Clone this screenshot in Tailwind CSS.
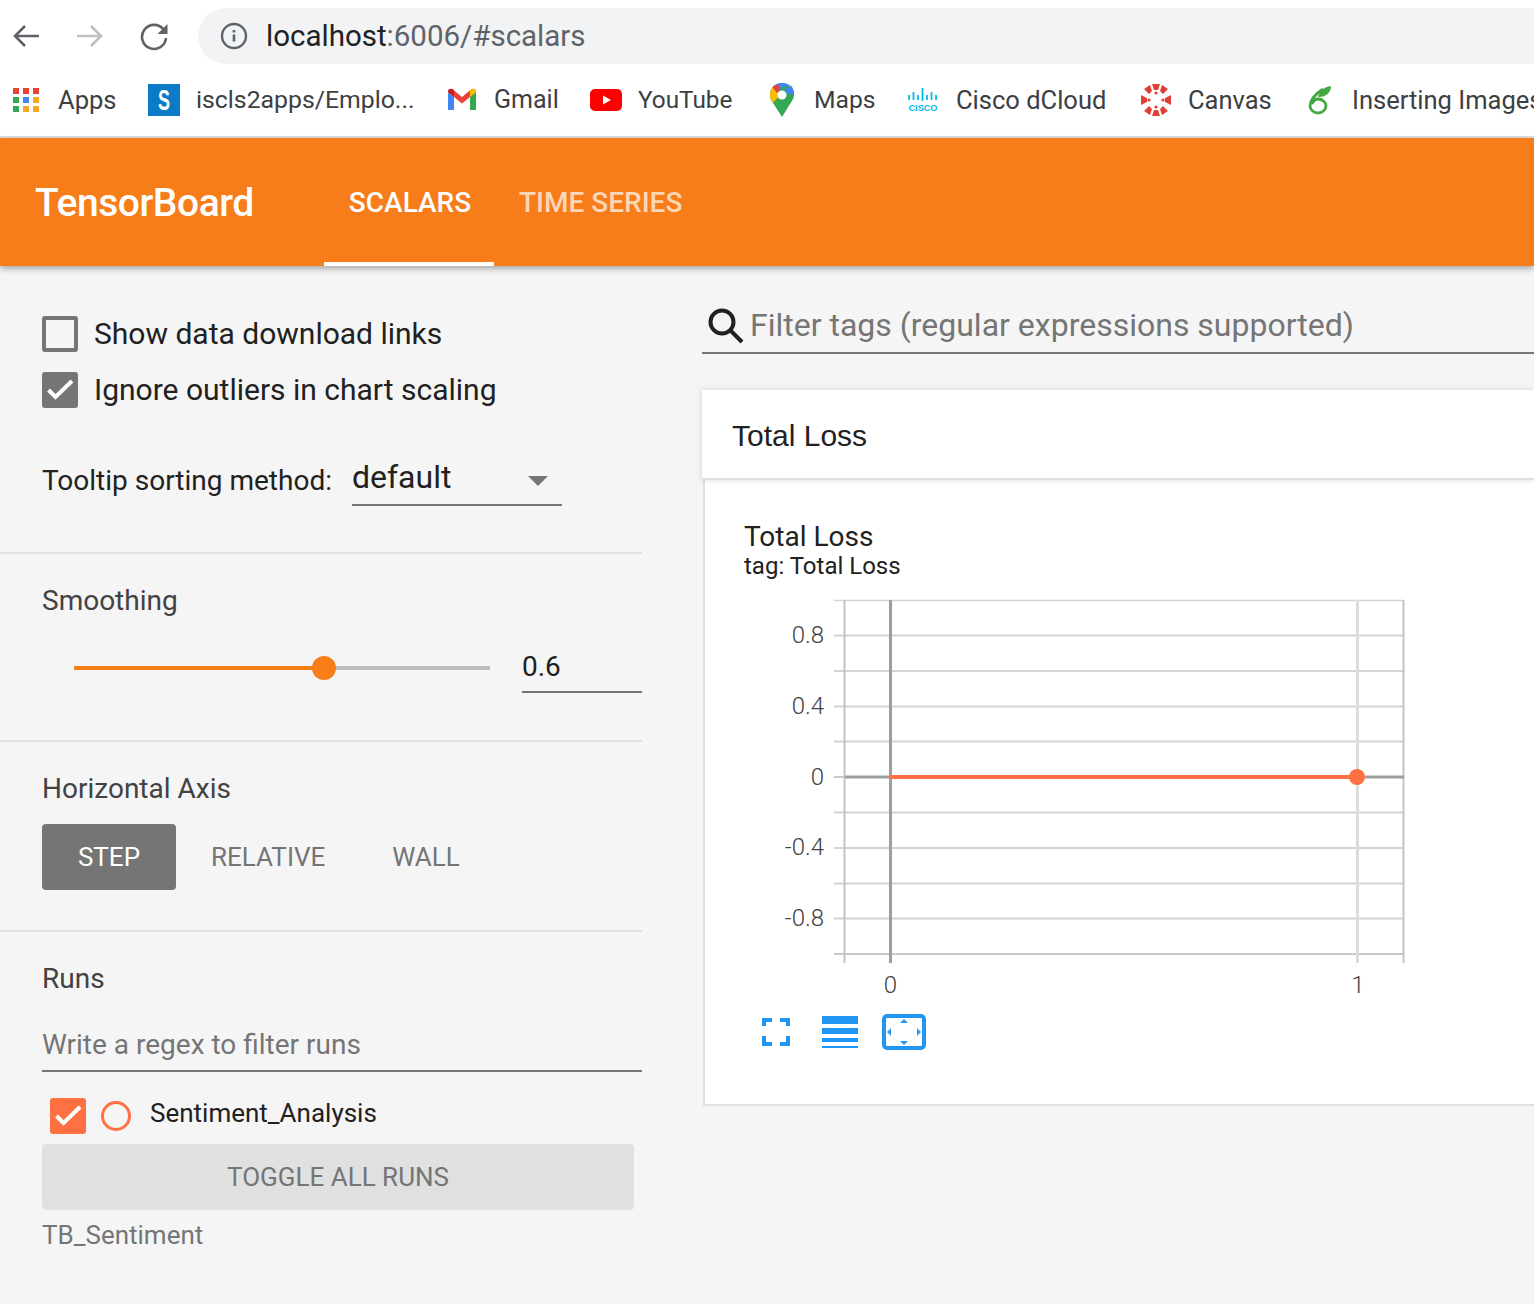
<!doctype html>
<html>
<head>
<meta charset="utf-8">
<script src="https://cdn.jsdelivr.net/npm/@tailwindcss/browser@4"></script>
</head>
<body class="m-0 w-[1534px] h-[1304px] overflow-hidden bg-[#f5f5f5] font-['Roboto',sans-serif] text-[#212121]">
<div class="h-[138px] bg-white border-b-2 border-[#dadce0]">
  <div class="h-[72px] flex items-center pl-[12px]">
    <svg class="shrink-0 w-[28px] h-[28px]" viewBox="0 0 28 28" fill="none" stroke="#5f6368" stroke-width="2.6"><path d="M27 14H3M13 4L3 14l10 10"/></svg>
    <svg class="shrink-0 w-[28px] h-[28px] ml-[36px]" viewBox="0 0 28 28" fill="none" stroke="#bdc1c6" stroke-width="2.6"><path d="M1 14h24M15 4l10 10-10 10"/></svg>
    <svg class="shrink-0 w-[30px] h-[30px] ml-[36px]" viewBox="0 0 30 30" fill="none"><path d="M23.5 8.5A12 12 0 1 0 26 17" stroke="#5f6368" stroke-width="2.6"/><path d="M27.5 3v10h-10z" fill="#5f6368"/></svg>
    <div class="shrink-0 ml-[28px] h-[56px] w-[1400px] rounded-l-[28px] bg-[#f1f3f4] flex items-center pl-[22px]">
      <svg class="shrink-0 w-[28px] h-[28px]" viewBox="0 0 28 28" fill="none"><circle cx="14" cy="14" r="12" stroke="#5f6368" stroke-width="2.4"/><path d="M14 12.5v7M14 8v2.6" stroke="#5f6368" stroke-width="2.6"/></svg>
      <span class="ml-[18px] text-[29.5px] text-[#202124] leading-none whitespace-nowrap relative top-[1px]">localhost<span class="text-[#5f6368]">:6006/#scalars</span></span>
    </div>
  </div>
  <div class="h-[56px] flex items-center text-[25.5px] text-[#3c4043] whitespace-nowrap">
    <div class="shrink-0 flex items-center w-[148px] pl-[12px]">
      <svg class="shrink-0 w-[28px] h-[28px]" viewBox="0 0 28 28"><rect x="1" y="2" width="6" height="6" fill="#ea4335"/><rect x="11" y="2" width="6" height="6" fill="#ea4335"/><rect x="21" y="2" width="6" height="6" fill="#ea4335"/><rect x="1" y="11" width="6" height="6" fill="#34a853"/><rect x="11" y="11" width="6" height="6" fill="#4285f4"/><rect x="21" y="11" width="6" height="6" fill="#f9a825"/><rect x="1" y="20" width="6" height="6" fill="#34a853"/><rect x="11" y="20" width="6" height="6" fill="#f9a825"/><rect x="21" y="20" width="6" height="6" fill="#f9a825"/></svg>
      <span class="ml-[18px]">Apps</span>
    </div>
    <div class="shrink-0 flex items-center w-[300px]">
      <div class="w-[32px] h-[32px] bg-[#0a7bc4] text-white flex items-center justify-center font-['Liberation_Sans',sans-serif] font-bold text-[30px] leading-none"><span class="scale-x-[0.6]">S</span></div>
      <span class="ml-[16px] text-[24.8px]">iscls2apps/Emplo...</span>
    </div>
    <div class="shrink-0 flex items-center w-[142px]">
      <svg class="shrink-0 w-[28px] h-[28px]" viewBox="0 0 28 28"><path d="M0 6v18h6V11z" fill="#4285f4"/><path d="M22 11v13h6V6z" fill="#34a853"/><path d="M0 6c0-3 3-4 5-2.500L14 11l9-7.500c2-1.500 5-.5 5 2.500l-6 5-8 6.500L6 11z" fill="#ea4335"/><path d="M0 6c0-3 3-4 5-2.500L6 4.500V11z" fill="#c5221f"/><path d="M28 6c0-3-3-4-5-2.500l-1 1V11z" fill="#fbbc04"/></svg>
      <span class="ml-[18px] text-[25px]">Gmail</span>
    </div>
    <div class="shrink-0 flex items-center w-[180px]">
      <svg class="shrink-0 w-[32px] h-[24px]" viewBox="0 0 32 24"><rect width="32" height="22" y="1" rx="5" fill="#f00"/><path d="M13 7.500v9l8-4.500z" fill="#fff"/></svg>
      <span class="ml-[16px] text-[24.3px]">YouTube</span>
    </div>
    <div class="shrink-0 flex items-center w-[138px]">
      <svg class="shrink-0 w-[24px] h-[34px]" viewBox="0 0 24 34"><path d="M12 0C5 0 0 5 0 12c0 3 1 5 3 8l9 14 8-13c2-3 4-6 4-9 0-7-5-12-12-12z" fill="#34a853"/><path d="M2.500 4.500A12 12 0 0 0 0 12c0 3 1 5 3 8L12 10z" fill="#fbbc04"/><path d="M2.500 4.500 8 9.500 12 4 20 2.500A12 12 0 0 0 12 0C8 0 4.500 2 2.500 4.500z" fill="#4285f4"/><path d="M2.500 4.500A12 12 0 0 1 8 1l2 5-3 4z" fill="#ea4335"/><path d="M16 5l5-2.500A12 12 0 0 1 24 12l-8-2z" fill="#4285f4"/><circle cx="12" cy="12" r="4.500" fill="#fff"/></svg>
      <span class="ml-[20px] text-[24.7px]">Maps</span>
    </div>
    <div class="shrink-0 flex items-center w-[232px]">
      <svg class="shrink-0 w-[30px] h-[24px]" viewBox="0 0 30 24"><path d="M1 7v5M5.500 4v8M10 7v5M14.500 0v13M19 7v5M23.500 4v8M28 7v5" stroke="#00bceb" stroke-width="1.800"/><text x="0.500" y="22.500" font-family="Liberation Sans" font-weight="700" font-size="9" textLength="29" lengthAdjust="spacingAndGlyphs" fill="#00bceb">CISCO</text></svg>
      <span class="ml-[18px]">Cisco dCloud</span>
    </div>
    <div class="shrink-0 flex items-center w-[168px]">
      <svg class="shrink-0 w-[32px] h-[34px]" viewBox="0 0 32 34" fill="#e13f33"><path d="M12 1h8l-2 6h-4zM12 33h8l-2-6h-4zM1 12v10l6-3v-4zM31 12v10l-6-3v-4z"/><path d="M4 6l6-4 2 6-3 3zM28 6l-6-4-2 6 3 3zM4 28l6 4 2-6-3-3zM28 28l-6 4-2-6 3-3z"/><circle cx="16" cy="10" r="1.600"/><circle cx="16" cy="24" r="1.600"/><circle cx="9" cy="17" r="1.600"/><circle cx="23" cy="17" r="1.600"/></svg>
      <span class="ml-[16px]">Canvas</span>
    </div>
    <div class="shrink-0 flex items-center">
      <svg class="shrink-0 w-[24px] h-[30px]" viewBox="0 0 24 30" fill="none"><path d="M15 4C6 10 2 16 2 21c0 4 4 7 8 7s8-3 8-7-4-7-8-7-5 3-6 5" stroke="#43a843" stroke-width="2.800"/><path d="M10 12C11 6 16 2 23 1c0 6-4 11-13 11z" fill="#43a843"/></svg>
      <span class="ml-[20px]">Inserting Images</span>
    </div>
  </div>
</div>
<header class="relative z-10 h-[128px] bg-[#f77c1a] flex items-stretch text-white shadow-[0_3px_6px_rgba(0,0,0,0.3)]">
  <div class="pl-[35px] w-[324px] flex items-center text-[39px] font-medium leading-none tracking-[-0.45px] pt-[2px]">TensorBoard</div>
  <div class="w-[170px] border-b-4 border-white flex items-center justify-center text-[28px] font-medium pt-[5px] pl-[2px]">SCALARS</div>
  <div class="ml-[25px] flex items-center text-[28px] font-medium text-white/70 pt-[2px]">TIME SERIES</div>
</header>
<main class="flex">
  <aside class="w-[642px] shrink-0">
    <div class="h-[288px] border-b-2 border-[#e0e0e0] pl-[42px] pt-[50px]">
      <div class="flex items-center h-[36px] text-[30px]">
        <div class="w-[36px] h-[36px] rounded-[3px] border-[4px] border-[#757575]"></div>
        <span class="ml-[16px] pb-[2px]">Show data download links</span>
      </div>
      <div class="flex items-center h-[36px] mt-[20px] text-[30px]">
        <div class="w-[36px] h-[36px] rounded-[3px] bg-[#757575] flex items-center justify-center"><svg class="w-[28px] h-[28px]" viewBox="0 0 28 28" fill="none" stroke="#fff" stroke-width="4"><path d="M2.500 14l7 7L26 5"/></svg></div>
        <span class="ml-[16px] pb-[2px]">Ignore outliers in chart scaling</span>
      </div>
      <div class="flex items-end mt-[44px]">
        <span class="text-[28px] leading-[40px] pb-[5px]">Tooltip sorting method:</span>
        <div class="relative ml-[20px] w-[210px] h-[54px] border-b-2 border-[#757575] text-[32px] leading-[42px] flex items-center pb-[2px]">default
          <div class="absolute right-[14px] top-[24px] w-0 h-0 border-l-[10px] border-r-[10px] border-t-[10px] border-l-transparent border-r-transparent border-t-[#757575]"></div>
        </div>
      </div>
    </div>
    <div class="h-[188px] border-b-2 border-[#e0e0e0] pl-[42px] pt-[30px]">
      <div class="text-[28px] leading-[34px] text-[#424242]">Smoothing</div>
      <div class="flex items-center mt-[25px]">
        <div class="relative ml-[32px] w-[416px] h-[4px] bg-[#bdbdbd]">
          <div class="h-[4px] w-[250px] bg-[#f77f17]"></div>
          <div class="absolute left-[238px] top-[-10px] w-[24px] h-[24px] rounded-full bg-[#f77f17]"></div>
        </div>
        <div class="ml-[32px] w-[120px] h-[50px] border-b-2 border-[#757575] text-[28px] leading-[48px]">0.6</div>
      </div>
    </div>
    <div class="h-[190px] border-b-2 border-[#e0e0e0] pl-[42px] pt-[30px]">
      <div class="text-[28px] leading-[34px] text-[#424242]">Horizontal Axis</div>
      <div class="flex items-center mt-[18px] text-[26px] leading-none text-[#757575]">
        <div class="w-[134px] h-[66px] rounded-[4px] bg-[#757575] text-white flex items-center justify-center">STEP</div>
        <span class="ml-[35px]">RELATIVE</span>
        <span class="ml-[67px]">WALL</span>
      </div>
    </div>
    <div class="pl-[42px] pt-[30px]">
      <div class="text-[28px] leading-[34px] text-[#424242]">Runs</div>
      <div class="w-[600px] h-[54px] mt-[22px] border-b-2 border-[#757575] text-[28px] leading-[54px] text-[#757575]">Write a regex to filter runs</div>
      <div class="flex items-center mt-[26px] pl-[8px] h-[36px]">
        <div class="w-[36px] h-[36px] rounded-[3px] bg-[#ff7043] flex items-center justify-center"><svg class="w-[28px] h-[28px]" viewBox="0 0 28 28" fill="none" stroke="#fff" stroke-width="4"><path d="M2.500 14l7 7L26 5"/></svg></div>
        <div class="ml-[15px] w-[30px] h-[30px] rounded-full border-[3px] border-[#ff7043]"></div>
        <span class="ml-[19px] text-[26px] leading-none pb-[7px]">Sentiment_Analysis</span>
      </div>
      <div class="w-[592px] h-[66px] mt-[10px] rounded-[4px] bg-[#e0e0e0] text-[#757575] text-[26px] flex items-center justify-center">TOGGLE ALL RUNS</div>
      <div class="mt-[9px] text-[26px] leading-[32px] text-[#757575]">TB_Sentiment</div>
    </div>
  </aside>
  <section class="ml-[60px] w-[832px] shrink-0">
    <div class="h-[88px] border-b-2 border-[#757575] flex items-end pb-[8px] pl-[6px]">
      <svg class="w-[36px] h-[36px]" viewBox="0 0 36 36" fill="none" stroke="#212121" stroke-width="4"><circle cx="14" cy="14" r="11.500"/><path d="M22 22l12 12"/></svg>
      <span class="ml-[6px] text-[32px] leading-[40px] text-[#757575] whitespace-nowrap relative top-[1px]">Filter tags (regular expressions supported)</span>
    </div>
    <div class="mt-[36px] h-[90px] bg-white border-b-2 border-[#e0e0e0] shadow-[0_0_6px_rgba(0,0,0,0.15)] pl-[30px] flex items-center font-['Liberation_Sans',sans-serif] text-[30px] relative z-[1] pt-[3px]">Total Loss</div>
    <div class="ml-[1px] h-[626px] bg-white border-l-2 border-b-2 border-[#e0e0e0] pl-[39px] pt-[42px]">
      <div class="text-[28px] leading-[30px]">Total Loss</div>
      <div class="text-[24px] leading-[28px]">tag: Total Loss</div>
      <svg class="block mt-[10px] ml-[10px]" width="700" height="470" viewBox="754 590 700 470" font-family="Roboto" font-weight="300" fill="#424242" font-size="24">
        <g stroke="#d4d4d4" stroke-width="2">
          <path d="M834 600.500H1404" stroke-width="1.500"/>
          <path d="M834 635.500H1404M834 671H1404M834 706.500H1404M834 741.500H1404M834 812.500H1404M834 848H1404M834 883.500H1404M834 918.500H1404"/>
          <path d="M834 777H1404M834 954H1404" stroke="#c8c8c8"/>
          <path d="M1357.500 600V963" stroke="#dcdcdc" stroke-width="3"/>
        </g>
        <path d="M844.500 600V963M1403.500 600V963" stroke="#c4c4c4" stroke-width="2" fill="none"/>
        <path d="M890.500 600V963" stroke="#9e9e9e" stroke-width="3" fill="none"/>
        <path d="M845 777H890M1365 777H1404" stroke="#9e9e9e" stroke-width="3" fill="none"/>
        <path d="M890 777H1357" stroke="#ff7043" stroke-width="4" fill="none"/>
        <circle cx="1357" cy="777" r="8" fill="#ff7043"/>
        <g text-anchor="end">
          <text x="824" y="643">0.8</text><text x="824" y="714">0.4</text><text x="824" y="785">0</text><text x="824" y="855">-0.4</text><text x="824" y="926">-0.8</text>
        </g>
        <g text-anchor="middle"><text x="890.500" y="993">0</text><text x="1358" y="993">1</text></g>
        <path d="M764 1026v-6h8m8 0h8v6M764 1036v8h8m8 0h8v-8" fill="none" stroke="#2196f3" stroke-width="4"/>
        <path d="M822 1016h36v8h-36zM822 1028h36v6h-36zM822 1038h36v4h-36zM822 1046h36v2h-36z" fill="#2196f3"/>
        <rect x="884" y="1016" width="40" height="32" rx="3" fill="none" stroke="#2196f3" stroke-width="4"/>
        <path d="M904 1019l4 4h-8zM904 1045l4-4h-8zM887 1032l4-4v8zM921 1032l-4-4v8z" fill="#2196f3"/>
      </svg>
    </div>
  </section>
</main>
</body>
</html>
